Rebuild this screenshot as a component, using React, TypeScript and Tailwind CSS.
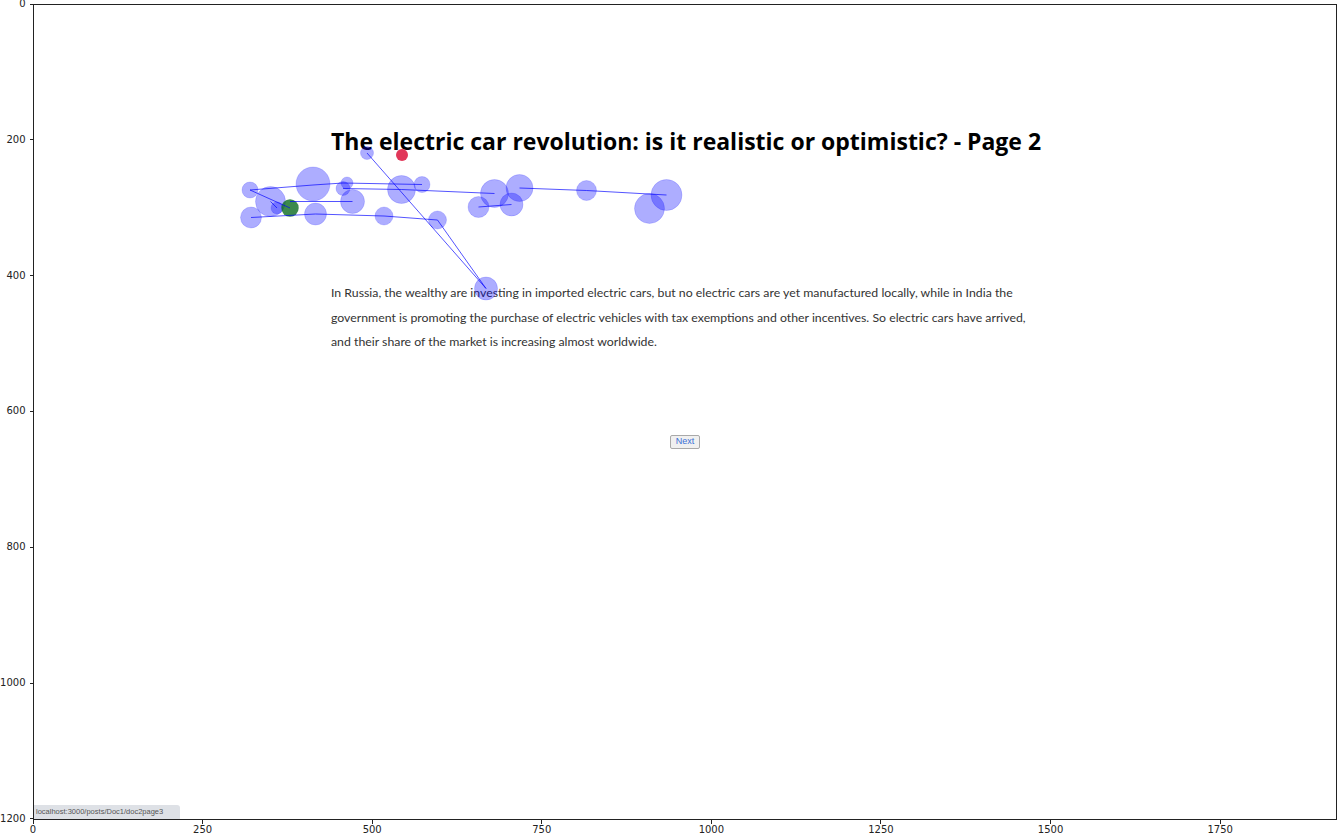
// Gaze-tracking plot: page screenshot with fixations drawn over it, inside a matplotlib-style frame

import React from 'react'

type Fix = { x: number; y: number; r: number }

// fixation centres in screen px
const fixations: Fix[] = [
  { x: 250, y: 190, r: 8 },
  { x: 313, y: 184, r: 17 },
  { x: 270.5, y: 201.5, r: 15 },
  { x: 277, y: 208, r: 6 },
  { x: 367, y: 153, r: 6.5 },
  { x: 347, y: 183, r: 6 },
  { x: 343, y: 188.5, r: 7 },
  { x: 352.5, y: 201.5, r: 12 },
  { x: 315.5, y: 214, r: 11 },
  { x: 251, y: 217.5, r: 10.5 },
  { x: 384, y: 216, r: 9 },
  { x: 401.5, y: 189.5, r: 14 },
  { x: 422, y: 184.5, r: 8 },
  { x: 437.5, y: 220, r: 9 },
  { x: 486, y: 288.5, r: 11.5 },
  { x: 478.5, y: 207, r: 10.5 },
  { x: 494.5, y: 193.5, r: 14 },
  { x: 511.5, y: 204.5, r: 11.5 },
  { x: 519.5, y: 188, r: 13.5 },
  { x: 586.5, y: 190.5, r: 10 },
  { x: 649.5, y: 208.5, r: 15 },
  { x: 666.5, y: 195, r: 15.5 },
]

const paths: [number, number][][] = [
  [[250, 190], [290, 208]],
  [[270.5, 201.5], [277, 208]],
  [[290, 201.5], [352.5, 201.5]],
  [[250, 190], [313, 185], [343, 183], [422, 184.5]],
  [[343, 188.5], [401.5, 189.5], [494.5, 193.5]],
  [[251, 217.5], [315.5, 214], [384, 216], [437.5, 220]],
  [[437.5, 220], [486, 288.5]],
  [[367, 153], [486, 288.5]],
  [[478.5, 207], [511.5, 204.5]],
  [[519.5, 188], [586.5, 190.5], [666.5, 195]],
]

const yTicks = ['0', '200', '400', '600', '800', '1000', '1200']
const xTicks = ['0', '250', '500', '750', '1000', '1250', '1500', '1750']

function GazeOverlay() {
  return (
    <svg
      className="absolute inset-0 pointer-events-none"
      width={1302}
      height={814}
      viewBox="34 5 1302 814"
    >
      {fixations.map((f, i) => (
        <circle
          key={i}
          cx={f.x}
          cy={f.y}
          r={f.r}
          fill="#0000ff"
          fillOpacity={0.32}
          stroke="#0000ff"
          strokeOpacity={0.15}
        />
      ))}
      <circle cx={290} cy={208} r={8.7} fill="#0b6b1f" fillOpacity={0.8} />
      <circle cx={402} cy={155} r={6} fill="#dc143c" fillOpacity={0.85} />
      {paths.map((p, i) => (
        <polyline
          key={i}
          points={p.map(([x, y]) => `${x},${y}`).join(' ')}
          fill="none"
          stroke="#0000ff"
          strokeOpacity={0.75}
          strokeWidth={0.9}
        />
      ))}
    </svg>
  )
}

export default function App() {
  return (
    <div className="w-[1337px] h-[836px] bg-white overflow-hidden font-['DejaVu_Sans',sans-serif] text-[10px] text-[#222]">
      <div className="flex pt-[4px]">
        {/* y axis */}
        <div className="w-[33px] h-[829px] -my-[7px] flex flex-col justify-between">
          {yTicks.map((t) => (
            <div key={t} className="h-[14px] flex items-center justify-end gap-[4px]">
              <span className="leading-none">{t}</span>
              <span className="w-[3.5px] h-px bg-[#222]" />
            </div>
          ))}
        </div>

        {/* axes with the page screenshot */}
        <div className="relative w-[1304px] h-[816px] border border-[#222] shrink-0">
          <div className="h-full flex flex-col">
            <div className="pl-[297px] w-[1100px]">
              <h1 className="mt-[122px] text-[23px] leading-[28px] font-bold text-black whitespace-nowrap font-['Open_Sans',sans-serif]">
                The electric car revolution: is it realistic or optimistic? - Page 2
              </h1>
              <p className="mt-[126px] w-[700px] text-[12.3px] leading-[24.5px] text-[#333] font-['Lato',sans-serif]">
                In Russia, the wealthy are investing in imported electric cars, but no electric cars are yet
                manufactured locally, while in India the government is promoting the purchase of electric
                vehicles with tax exemptions and other incentives. So electric cars have arrived, and their
                share of the market is increasing almost worldwide.
              </p>
            </div>
            <div className="mt-[80px] flex justify-center">
              <button className="h-[14px] px-[5px] flex items-center border border-[#a9a9a9] bg-[#f0f0f0] rounded-[2px] text-[9px] text-[#3b6fd6] font-['Liberation_Sans',sans-serif]">
                Next
              </button>
            </div>
            <div className="mt-auto self-start w-[146px] h-[14px] pl-[2px] flex items-center bg-[#dee1e6] rounded-tr-[3px] text-[7.5px] text-[#555] font-['Liberation_Sans',sans-serif]">
              localhost:3000/posts/Doc1/doc2page3
            </div>
          </div>
          <GazeOverlay />
        </div>
      </div>

      {/* x axis */}
      <div className="flex -ml-[51.8px]">
        {xTicks.map((t) => (
          <div key={t} className="w-[169.6px] shrink-0 flex flex-col items-center">
            <span className="w-px h-[3.5px] bg-[#222]" />
            <span className="mt-[1.5px] leading-none">{t}</span>
          </div>
        ))}
      </div>
    </div>
  )
}
